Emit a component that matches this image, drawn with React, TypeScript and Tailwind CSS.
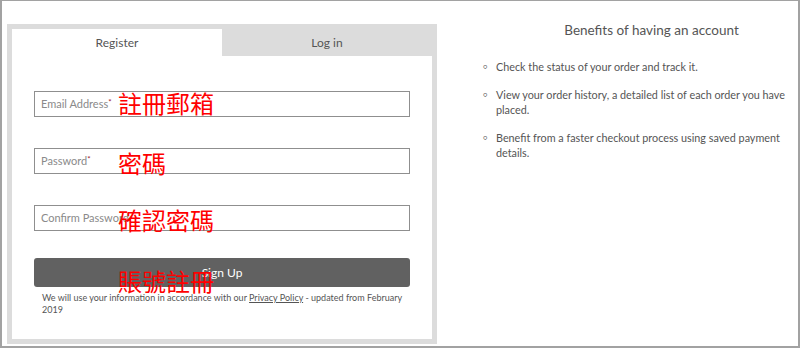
import React from 'react';

const cjk = "font-['Noto_Sans_CJK_TC','Noto_Sans_CJK_SC',sans-serif]";

const Field = ({ label, required, note, noteClass }: { label: string; required?: boolean; note: string; noteClass: string }) => (
  <div className="relative h-[26px] border border-[#8f8f8f] bg-white flex items-center px-[6px]">
    <span className="text-[11px] text-[#8a8a8a]">
      {label}
      {required && <sup className="text-[#a01c2c] text-[8px] top-[-0.4em]">*</sup>}
    </span>
    {/* red annotation laid over the screenshot */}
    <span className={`absolute left-[83px] ${noteClass} text-[24px] leading-none text-[#ff0000] ${cjk}`}>{note}</span>
  </div>
);

export default function App() {
  return (
    <div className="w-[800px] h-[348px] bg-white border-2 border-t border-[#a2a2a2] flex font-['Lato',sans-serif]">
      {/* ── Register panel ── */}
      <div className="ml-[5px] mt-[23px] w-[430px] h-[320px] bg-[#dcdcdc] p-[5px] shrink-0">
        <div className="bg-white h-full flex flex-col">
          <div className="flex h-[27px] text-[12px] text-[#555]">
            <div className="w-1/2 bg-white flex items-center justify-center">Register</div>
            <div className="w-1/2 bg-[#dcdcdc] flex items-center justify-center">Log in</div>
          </div>

          <div className="px-[22px] pt-[35px] flex flex-col">
            <Field label="Email Address" required note="註冊郵箱" noteClass="top-[-1px]" />
            <div className="mt-[31px]">
              <Field label="Password" required note="密碼" noteClass="top-[2px]" />
            </div>
            <div className="mt-[31px]">
              <Field label="Confirm Password" note="確認密碼" noteClass="top-[2px]" />
            </div>

            <div className="relative mt-[27px]">
              <button className="w-full h-[29px] rounded-[3px] bg-[#616161] text-white text-[12px]">Sign Up</button>
              <span className={`absolute left-[84px] top-[11px] text-[24px] leading-none text-[#ff0000] ${cjk}`}>賬號註冊</span>
            </div>

            <p className="mt-[5px] pl-[8px] text-[9px] leading-[12px] text-[#555]">
              We will use your information in accordance with our{' '}
              <span className="underline">Privacy Policy</span> - updated from February 2019
            </p>
          </div>
        </div>
      </div>

      {/* ── Benefits ── */}
      <div className="flex-1 pl-[46px]">
        <h2 className="mt-[19px] text-center text-[13.5px] text-[#555] pl-[22px]">Benefits of having an account</h2>
        <ul className="mt-[19px] flex flex-col gap-[13px] text-[10.8px] leading-[15px] text-[#555]">
          <li className="flex">
            <span className="w-[13px] shrink-0 text-[7px] leading-[15px]">○</span>
            <span>Check the status of your order and track it.</span>
          </li>
          <li className="flex">
            <span className="w-[13px] shrink-0 text-[7px] leading-[15px]">○</span>
            <span>View your order history, a detailed list of each order you have placed.</span>
          </li>
          <li className="flex">
            <span className="w-[13px] shrink-0 text-[7px] leading-[15px]">○</span>
            <span>Benefit from a faster checkout process using saved payment details.</span>
          </li>
        </ul>
      </div>
    </div>
  );
}
